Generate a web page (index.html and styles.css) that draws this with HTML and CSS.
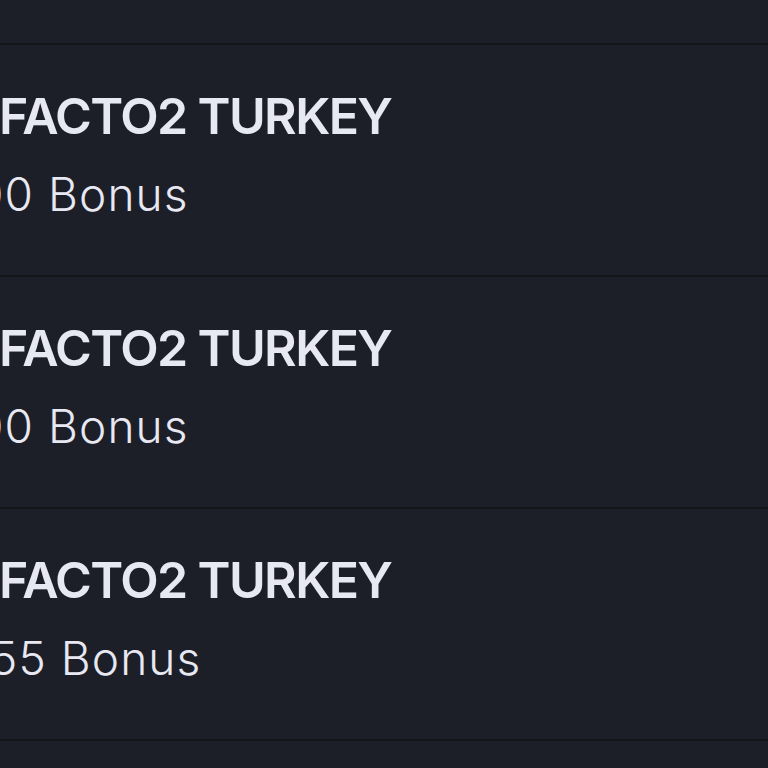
FILE: index.html
```html
<!DOCTYPE html>
<html>
<head>
<meta charset="utf-8">
<link rel="stylesheet" href="styles.css">
</head>
<body>
<div class="list">
  <div class="row row-top"></div>
  <div class="row">
    <div class="title">FACTO2 TURKEY</div>
    <div class="bonus b1">00 Bonus</div>
  </div>
  <div class="row">
    <div class="title">FACTO2 TURKEY</div>
    <div class="bonus b1">00 Bonus</div>
  </div>
  <div class="row">
    <div class="title">FACTO2 TURKEY</div>
    <div class="bonus b3">55 Bonus</div>
  </div>
  <div class="row row-bottom"></div>
</div>
</body>
</html>
```
FILE: styles.css
```css
html, body {
  margin: 0;
  padding: 0;
  background: #1d1f28;
  width: 768px;
  height: 768px;
  overflow: hidden;
}
.list {
  display: flex;
  flex-direction: column;
  overflow: hidden;
  font-family: Inter, "Noto Sans", sans-serif;
  color: #e7e8f1;
}
.row {
  height: 230px;
  border-bottom: 2px solid #14161c;
  display: flex;
  flex-direction: column;
  white-space: nowrap;
}
.row-top {
  height: 43px;
}
.row-bottom {
  height: 40px;
  border-bottom: none;
}
.title {
  margin-top: 46px;
  font-size: 50px;
  line-height: 51px;
  font-weight: 600;
  letter-spacing: -1.6px;
  margin-left: -1px;
}
.bonus {
  margin-top: 29px;
  font-size: 46px;
  line-height: 46px;
  font-weight: 300;
  letter-spacing: 1.1px;
}
.b1 { margin-left: -25px; }
.b3 { margin-left: -10px; }
```
